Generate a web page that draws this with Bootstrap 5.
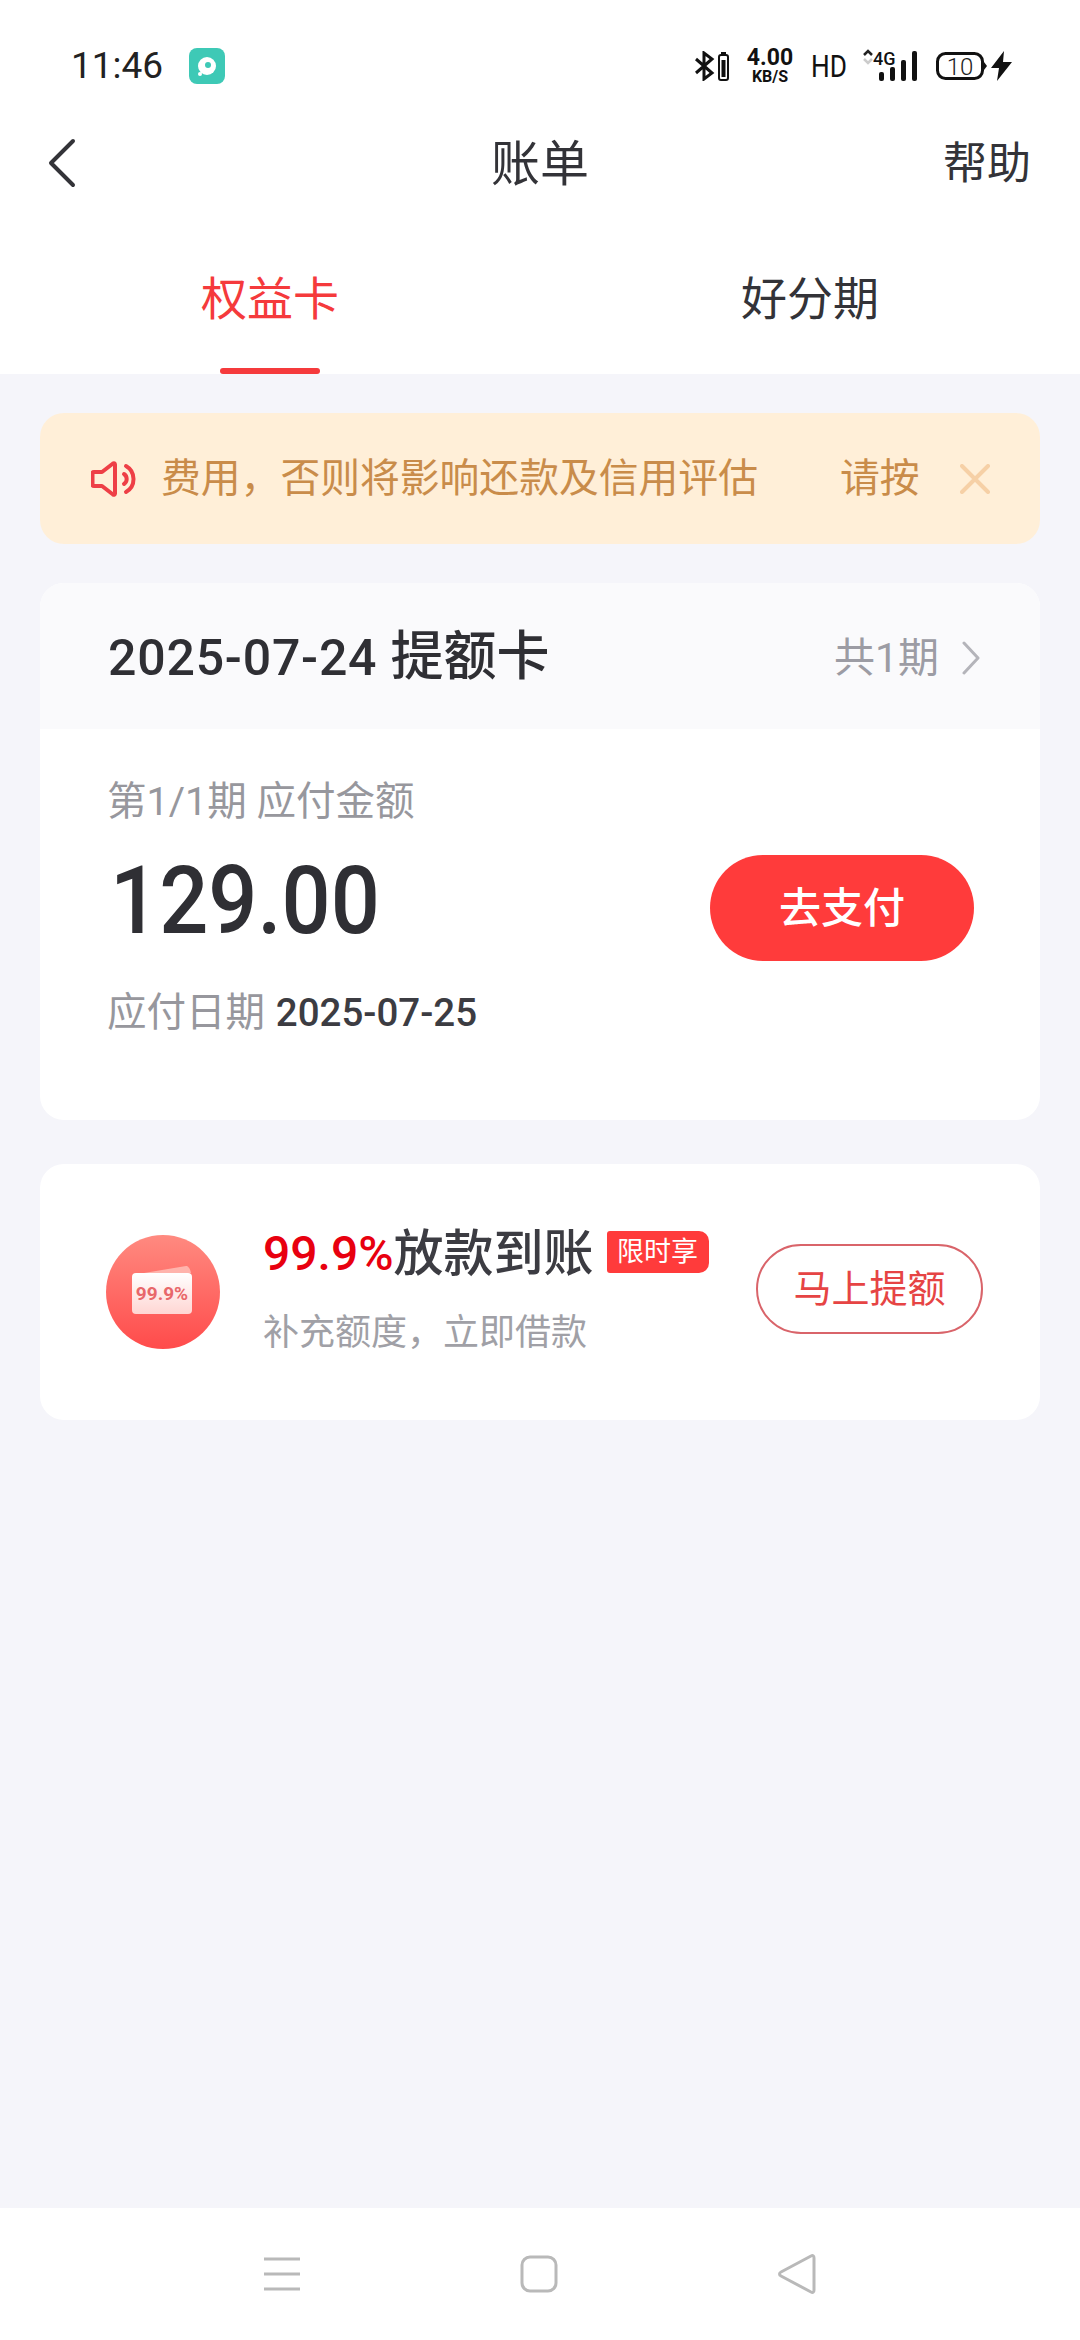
<!DOCTYPE html>
<html lang="zh-CN">
<head>
    <meta charset="UTF-8">
    <title>账单</title>
    <link href="https://cdn.jsdelivr.net/npm/bootstrap@5.3.2/dist/css/bootstrap.min.css" rel="stylesheet">
    <style>
        body {
            font-family: Roboto, "Noto Sans CJK SC", sans-serif;
            background-color: #f5f5fa;
            color: #333338;
            width: 1080px;
            min-height: 2340px;
        }
        .page-wrap { min-height: 2340px; }

        /* status bar */
        .status-bar { height: 100px; padding: 48px 68px 0 71px; }
        .status-left { gap: 26px; height: 36px; }
        .status-time { font-size: 37px; line-height: 36px; color: #222; letter-spacing: 0; }
        .app-dot { width: 36px; height: 36px; border-radius: 8px; background-color: #3ec9b6; }
        .status-right { height: 36px; }
        .speed-box { width: 48px; margin: 0 17px; text-align: center; font-weight: 700; color: #111; }
        .speed-num { font-size: 23px; line-height: 22px; }
        .speed-unit { font-size: 16px; line-height: 16px; }
        .hd-text {
            display: inline-block;
            width: 35px;
            margin-right: 16px;
            font-size: 32px;
            line-height: 36px;
            color: #111;
            transform: scaleX(.82);
            transform-origin: left center;
        }
        .net-box { width: 56px; height: 36px; margin-right: 18px; }
        .net-label { font-size: 18px; font-weight: 500; }
        .batt-box { margin-right: 3px; }

        /* top nav */
        .top-nav { height: 126px; padding: 0 49px 0 47px; }
        .nav-title { font-size: 49px; line-height: 60px; color: #333338; margin-top: 2px; }
        .nav-help { font-size: 44px; line-height: 60px; color: #333338; margin-top: 2px; }

        /* tabs */
        .tab-col { height: 148px; padding-top: 43px; }
        .tab-text { font-size: 46px; line-height: 60px; color: #333338; }
        .tab-active .tab-text { color: #f53a3c; }
        .tab-line { width: 100px; height: 6px; margin-top: 39px; border-radius: 3px; background-color: #f53a3c; }

        /* content */
        .content-wrap { padding: 39px 40px 0; }
        .notice-bar {
            height: 131px;
            margin: 0 0 39px;
            padding: 0 54px 0 51px;
            border: 0;
            border-radius: 24px;
            background-color: #ffefd8;
            color: #c98c4a;
            font-size: 39.8px;
            line-height: 50px;
        }
        .notice-text { margin: 0 82px 0 23px; }
        .notice-close { margin-left: 40px; }

        .bill-card { border: 0; border-radius: 24px; overflow: hidden; background-color: #fff; }
        .bill-head {
            height: 146px;
            padding: 3px 59px 0 68px;
            background-color: #fafafc;
        }
        .bill-name { font-size: 50px; line-height: 60px; font-weight: 500; color: #2f2f34; letter-spacing: .8px; }
        .bill-kind { font-size: 53px; letter-spacing: 0; }
        .bill-count { font-size: 41px; line-height: 50px; color: #9c9ca4; margin-right: 22px; }
        .bill-body { height: 391px; padding: 45px 66px 0 67px; }
        .grey-line { font-size: 39.5px; line-height: 56px; color: #97979d; }
        .bill-amount {
            font-size: 94px;
            line-height: 100px;
            font-weight: 500;
            color: #2f2f34;
            margin: 21px 0 34px 3px;
            transform: scaleX(.92);
            transform-origin: left center;
        }
        .bill-date { font-weight: 500; color: #3c3c42; margin-left: 1px; font-size: 38.5px; }
        .pay-btn {
            width: 264px;
            height: 106px;
            margin-top: 81px;
            padding: 0;
            border: 0;
            border-radius: 53px;
            background-color: #ff3b3b;
            color: #fff;
            font-size: 42px;
            font-weight: 500;
        }

        .promo-card { height: 256px; margin-top: 44px; padding: 0 57px 0 66px; }
        .promo-text { margin-left: 43px; margin-top: -3px; }
        .promo-title { font-size: 50px; line-height: 60px; font-weight: 500; color: #3c3c42; }
        .promo-rate { color: #e8000f; font-size: 48px; }
        .promo-tag {
            width: 102px;
            height: 42px;
            margin: 0 0 3px 13px;
            border-radius: 3px 10px 10px 3px;
            background-color: #ff3b3b;
            color: #fff;
            font-size: 27px;
            font-weight: 400;
            line-height: 42px;
            text-align: center;
        }
        .promo-sub { font-size: 36px; line-height: 50px; color: #a0a0a6; margin-top: 24px; }
        .promo-btn {
            width: 227px;
            height: 90px;
            padding: 0;
            border: 2px solid #d9646a;
            border-radius: 45px;
            background-color: #fff;
            color: #e64444;
            font-size: 38px;
            line-height: 1;
            margin-top: -6px;
        }

        /* bottom system bar */
        .sys-bar { height: 132px; padding: 0 264px; }
    </style>
</head>
<body>
    <div class="page-wrap d-flex flex-column">
        <header class="bg-white">
            <div class="status-bar d-flex justify-content-between align-items-start">
                <div class="status-left d-flex align-items-center">
                    <span class="status-time">11:46</span>
                    <span class="app-dot d-flex align-items-center justify-content-center">
                        <svg width="24" height="24" viewBox="0 0 24 24"><circle cx="12" cy="12" r="9" fill="#fff"/><circle cx="13" cy="11" r="3" fill="#3ec9b6"/><circle cx="5" cy="20" r="2" fill="#fff"/></svg>
                    </span>
                </div>
                <div class="status-right d-flex align-items-center">
                    <svg width="36" height="30" viewBox="0 0 36 30" class="flex-shrink-0">
                        <path d="M3 8l16 14-8 6V2l8 6L3 22" fill="none" stroke="#111" stroke-width="3"/>
                        <rect x="26" y="4" width="9" height="25" rx="2" fill="none" stroke="#111" stroke-width="2"/>
                        <rect x="28.5" y="9" width="4" height="17" fill="#111"/>
                        <rect x="28" y="1" width="5" height="3" fill="#111"/>
                    </svg>
                    <div class="speed-box">
                        <div class="speed-num">4.00</div>
                        <div class="speed-unit">KB/S</div>
                    </div>
                    <span class="hd-text">HD</span>
                    <svg class="net-box" viewBox="0 0 56 36">
                        <path d="M2 7l4-4 4 4" fill="none" stroke="#222" stroke-width="2.5"/>
                        <path d="M2 11l4 4 4-4" fill="none" stroke="#ccc" stroke-width="2.5"/>
                        <text x="11" y="17" class="net-label" fill="#111">4G</text>
                        <rect x="17" y="24" width="5" height="9" rx="2" fill="#111"/>
                        <rect x="28" y="19" width="5" height="14" rx="2" fill="#111"/>
                        <rect x="39" y="12" width="5" height="21" rx="2" fill="#111"/>
                        <rect x="50" y="3" width="5" height="30" rx="2" fill="#111"/>
                    </svg>
                    <svg class="batt-box" width="52" height="28" viewBox="0 0 52 28">
                        <rect x="1.500" y="1.500" width="45" height="25" rx="8" fill="none" stroke="#111" stroke-width="3"/>
                        <path d="M48 10l3 4-3 4z" fill="#111"/>
                        <text x="24" y="23" font-size="24" font-weight="300" text-anchor="middle" fill="#222">10</text>
                    </svg>
                    <svg width="21" height="30" viewBox="0 0 21 30"><path d="M13 0L0 17h8l-2 13L21 11h-9z" fill="#111"/></svg>
                </div>
            </div>

            <nav class="top-nav d-flex justify-content-between align-items-center position-relative">
                <svg width="30" height="50" viewBox="0 0 30 50">
                    <path d="M26 3L4 25l22 22" fill="none" stroke="#333338" stroke-width="4" stroke-linecap="round" stroke-linejoin="round"/>
                </svg>
                <span class="nav-title position-absolute top-50 start-50 translate-middle">账单</span>
                <span class="nav-help">帮助</span>
            </nav>

            <div class="row g-0">
                <div class="col-6 tab-col tab-active d-flex flex-column align-items-center">
                    <span class="tab-text">权益卡</span>
                    <span class="tab-line"></span>
                </div>
                <div class="col-6 tab-col d-flex flex-column align-items-center">
                    <span class="tab-text">好分期</span>
                </div>
            </div>
        </header>

        <main class="content-wrap">
            <div class="alert notice-bar d-flex align-items-center">
                <svg width="47" height="36" viewBox="0 0 47 36" class="flex-shrink-0">
                    <path d="M3 11h8L22 2.500c1-.7 2-.2 2 1v29c0 1.200-1 1.700-2 1L11 25H3c-1 0-1.500-.6-1.500-1.500v-11C1.500 11.600 2 11 3 11z" fill="none" stroke="#ee3f46" stroke-width="4" stroke-linejoin="round"/>
                    <path d="M33 13a6 6 0 0 1 0 10" fill="none" stroke="#ee3f46" stroke-width="4" stroke-linecap="round"/>
                    <path d="M35 5a15 15 0 0 1 0 26" fill="none" stroke="#ee3f46" stroke-width="4" stroke-linecap="round"/>
                </svg>
                <span class="notice-text text-nowrap">费用，否则将影响还款及信用评估</span>
                <span class="text-nowrap">请按</span>
                <svg class="notice-close flex-shrink-0" width="30" height="30" viewBox="0 0 30 30">
                    <path d="M2 2l26 26M28 2L2 28" stroke="#f6d0a6" stroke-width="4" stroke-linecap="round"/>
                </svg>
            </div>

            <div class="card bill-card">
                <div class="bill-head d-flex align-items-center justify-content-between">
                    <span class="bill-name">2025-07-24 <span class="bill-kind">提额卡</span></span>
                    <span class="d-flex align-items-center">
                        <span class="bill-count">共1期</span>
                        <svg width="20" height="34" viewBox="0 0 20 34"><path d="M3 2l14 15L3 32" fill="none" stroke="#b4b4ba" stroke-width="3" stroke-linecap="round" stroke-linejoin="round"/></svg>
                    </span>
                </div>
                <div class="bill-body d-flex justify-content-between align-items-start">
                    <div>
                        <div class="grey-line">第1/1期 应付金额</div>
                        <div class="bill-amount">129.00</div>
                        <div class="grey-line">应付日期 <span class="bill-date">2025-07-25</span></div>
                    </div>
                    <button type="button" class="btn pay-btn">去支付</button>
                </div>
            </div>

            <div class="card bill-card promo-card flex-row align-items-center">
                <svg width="114" height="114" viewBox="0 0 114 114" class="flex-shrink-0">
                    <defs>
                        <linearGradient id="coinFill" x1="0" y1="0" x2="0" y2="1">
                            <stop offset="0" stop-color="#ff8a80"/>
                            <stop offset="1" stop-color="#ff4b4b"/>
                        </linearGradient>
                        <linearGradient id="walletFill" x1="0" y1="0" x2="0" y2="1">
                            <stop offset="0" stop-color="#ffffff"/>
                            <stop offset="1" stop-color="#ffd6d3"/>
                        </linearGradient>
                    </defs>
                    <circle cx="57" cy="57" r="57" fill="url(#coinFill)"/>
                    <path d="M38 38l42-7c2 0 4 2 5 7z" fill="#ffb3ac"/>
                    <rect x="26" y="38" width="60" height="41" rx="4" fill="url(#walletFill)"/>
                    <text x="56" y="65" font-size="19" font-weight="700" text-anchor="middle" fill="#e8676a">99.9%</text>
                </svg>
                <div class="promo-text">
                    <div class="promo-title d-flex align-items-center text-nowrap">
                        <span class="promo-rate">99.9%</span><span>放款到账</span><span class="promo-tag">限时享</span>
                    </div>
                    <div class="promo-sub">补充额度，立即借款</div>
                </div>
                <button type="button" class="btn promo-btn ms-auto flex-shrink-0">马上提额</button>
            </div>
        </main>

        <footer class="sys-bar bg-white mt-auto d-flex justify-content-between align-items-center">
            <svg width="36" height="36" viewBox="0 0 36 36">
                <path d="M0 3h36M0 18h36M0 33h36" stroke="#b9b9b9" stroke-width="3"/>
            </svg>
            <svg width="38" height="38" viewBox="0 0 38 38">
                <rect x="2" y="2" width="34" height="34" rx="8" fill="none" stroke="#b9b9b9" stroke-width="3"/>
            </svg>
            <svg width="38" height="42" viewBox="0 0 38 42">
                <path d="M33 3c2-1 3 0 3 2v32c0 2-1 3-3 2L3 23c-2-1-2-3 0-4z" fill="none" stroke="#b9b9b9" stroke-width="3" stroke-linejoin="round"/>
            </svg>
        </footer>
    </div>

    <script src="https://cdn.jsdelivr.net/npm/bootstrap@5.3.2/dist/js/bootstrap.bundle.min.js"></script>
</body>
</html>
